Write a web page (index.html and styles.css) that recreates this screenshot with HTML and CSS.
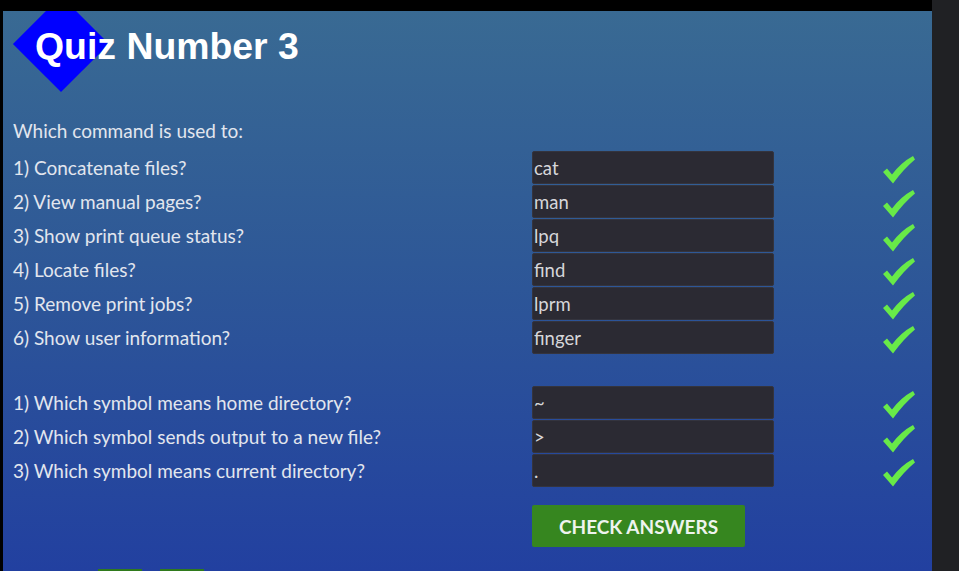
FILE: index.html
```html
<!DOCTYPE html>
<html>
<head>
<meta charset="utf-8">
<link rel="stylesheet" href="styles.css">
</head>
<body>
<div class="page">
  <div class="panel">
    <header class="header">
      <div class="diamond"></div>
      <h1 class="title">Quiz Number 3</h1>
    </header>
    <p class="intro">Which command is used to:</p>
    <div class="group">
      <div class="row"><span class="label">1) Concatenate files?</span><input class="answer" value="cat"><svg class="check" viewBox="0 0 32 28"><path d="M0 16 L4 12.5 L9 18.5 Q18 6.5 30 0 L32 3.5 Q21 12.5 10 27.5 Z"/></svg></div>
      <div class="row"><span class="label">2) View manual pages?</span><input class="answer" value="man"><svg class="check" viewBox="0 0 32 28"><path d="M0 16 L4 12.5 L9 18.5 Q18 6.5 30 0 L32 3.5 Q21 12.5 10 27.5 Z"/></svg></div>
      <div class="row"><span class="label">3) Show print queue status?</span><input class="answer" value="lpq"><svg class="check" viewBox="0 0 32 28"><path d="M0 16 L4 12.5 L9 18.5 Q18 6.5 30 0 L32 3.5 Q21 12.5 10 27.5 Z"/></svg></div>
      <div class="row"><span class="label">4) Locate files?</span><input class="answer" value="find"><svg class="check" viewBox="0 0 32 28"><path d="M0 16 L4 12.5 L9 18.5 Q18 6.5 30 0 L32 3.5 Q21 12.5 10 27.5 Z"/></svg></div>
      <div class="row"><span class="label">5) Remove print jobs?</span><input class="answer" value="lprm"><svg class="check" viewBox="0 0 32 28"><path d="M0 16 L4 12.5 L9 18.5 Q18 6.5 30 0 L32 3.5 Q21 12.5 10 27.5 Z"/></svg></div>
      <div class="row"><span class="label">6) Show user information?</span><input class="answer" value="finger"><svg class="check" viewBox="0 0 32 28"><path d="M0 16 L4 12.5 L9 18.5 Q18 6.5 30 0 L32 3.5 Q21 12.5 10 27.5 Z"/></svg></div>
    </div>
    <div class="group group2">
      <div class="row"><span class="label">1) Which symbol means home directory?</span><input class="answer" value="~"><svg class="check" viewBox="0 0 32 28"><path d="M0 16 L4 12.5 L9 18.5 Q18 6.5 30 0 L32 3.5 Q21 12.5 10 27.5 Z"/></svg></div>
      <div class="row"><span class="label">2) Which symbol sends output to a new file?</span><input class="answer" value="&gt;"><svg class="check" viewBox="0 0 32 28"><path d="M0 16 L4 12.5 L9 18.5 Q18 6.5 30 0 L32 3.5 Q21 12.5 10 27.5 Z"/></svg></div>
      <div class="row"><span class="label">3) Which symbol means current directory?</span><input class="answer" value="."><svg class="check" viewBox="0 0 32 28"><path d="M0 16 L4 12.5 L9 18.5 Q18 6.5 30 0 L32 3.5 Q21 12.5 10 27.5 Z"/></svg></div>
    </div>
    <div class="actions">
      <button class="check-btn">CHECK ANSWERS</button>
    </div>
    <div class="nav">
      <div class="nav-btn"></div>
      <div class="nav-btn"></div>
    </div>
  </div>
</div>
</body>
</html>
```
FILE: styles.css
```css
html, body {
  margin: 0;
  padding: 0;
  height: 100%;
  overflow: hidden;
}
body {
  background: #202124;
  font-family: Lato, "Noto Sans", sans-serif;
}
.page {
  width: 932px;
  height: 571px;
  background: #000;
  padding: 11px 0 0 3px;
  box-sizing: border-box;
}
.panel {
  height: 560px;
  background: linear-gradient(to bottom, #396a93 0%, #2e5897 45%, #2240a0 100%);
  overflow: hidden;
  position: relative;
}
.header {
  position: relative;
  height: 100px;
}
.diamond {
  position: absolute;
  left: 24px;
  top: -1px;
  width: 68px;
  height: 68px;
  background: #0000ff;
  transform: rotate(45deg);
}
.title {
  position: relative;
  margin: 0;
  padding: 15px 0 0 32px;
  font-family: "Liberation Sans", Arial, sans-serif;
  font-weight: bold;
  font-size: 37.4px;
  line-height: 41px;
  color: #fff;
}
.intro {
  margin: 0;
  padding-left: 10px;
  height: 40px;
  line-height: 40px;
  font-size: 19px;
  color: #e2e6ee;
}
.group {
  display: flex;
  flex-direction: column;
  gap: 1px;
}
.group2 {
  margin-top: 32px;
}
.row {
  display: grid;
  grid-template-columns: 519px 242px 1fr;
  align-items: center;
  height: 33px;
  padding-left: 10px;
}
.label {
  font-size: 19px;
  color: #e2e6ee;
}
.answer {
  box-sizing: border-box;
  width: 242px;
  height: 33px;
  margin: 0;
  padding: 0 0 0 1px;
  background: #2b2a33;
  border: 1px solid #34343e;
  border-radius: 2px;
  color: #d6d6da;
  font-family: Lato, "Noto Sans", sans-serif;
  font-size: 18.5px;
  outline: none;
}
.check {
  width: 32px;
  height: 28px;
  margin: 4px 0 0 109px;
  fill: #68ea48;
}
.actions {
  padding-left: 529px;
  margin-top: 18px;
}
.check-btn {
  display: block;
  width: 213px;
  height: 42px;
  border: none;
  border-radius: 2px;
  background: #36861f;
  color: #eef4ee;
  font-family: Lato, "Noto Sans", sans-serif;
  font-weight: bold;
  font-size: 19px;
  padding: 0;
}
.nav {
  display: flex;
  gap: 18px;
  padding-left: 95px;
  margin-top: 22px;
}
.nav-btn {
  width: 44px;
  height: 30px;
  background: #2f7a1c;
}
```
